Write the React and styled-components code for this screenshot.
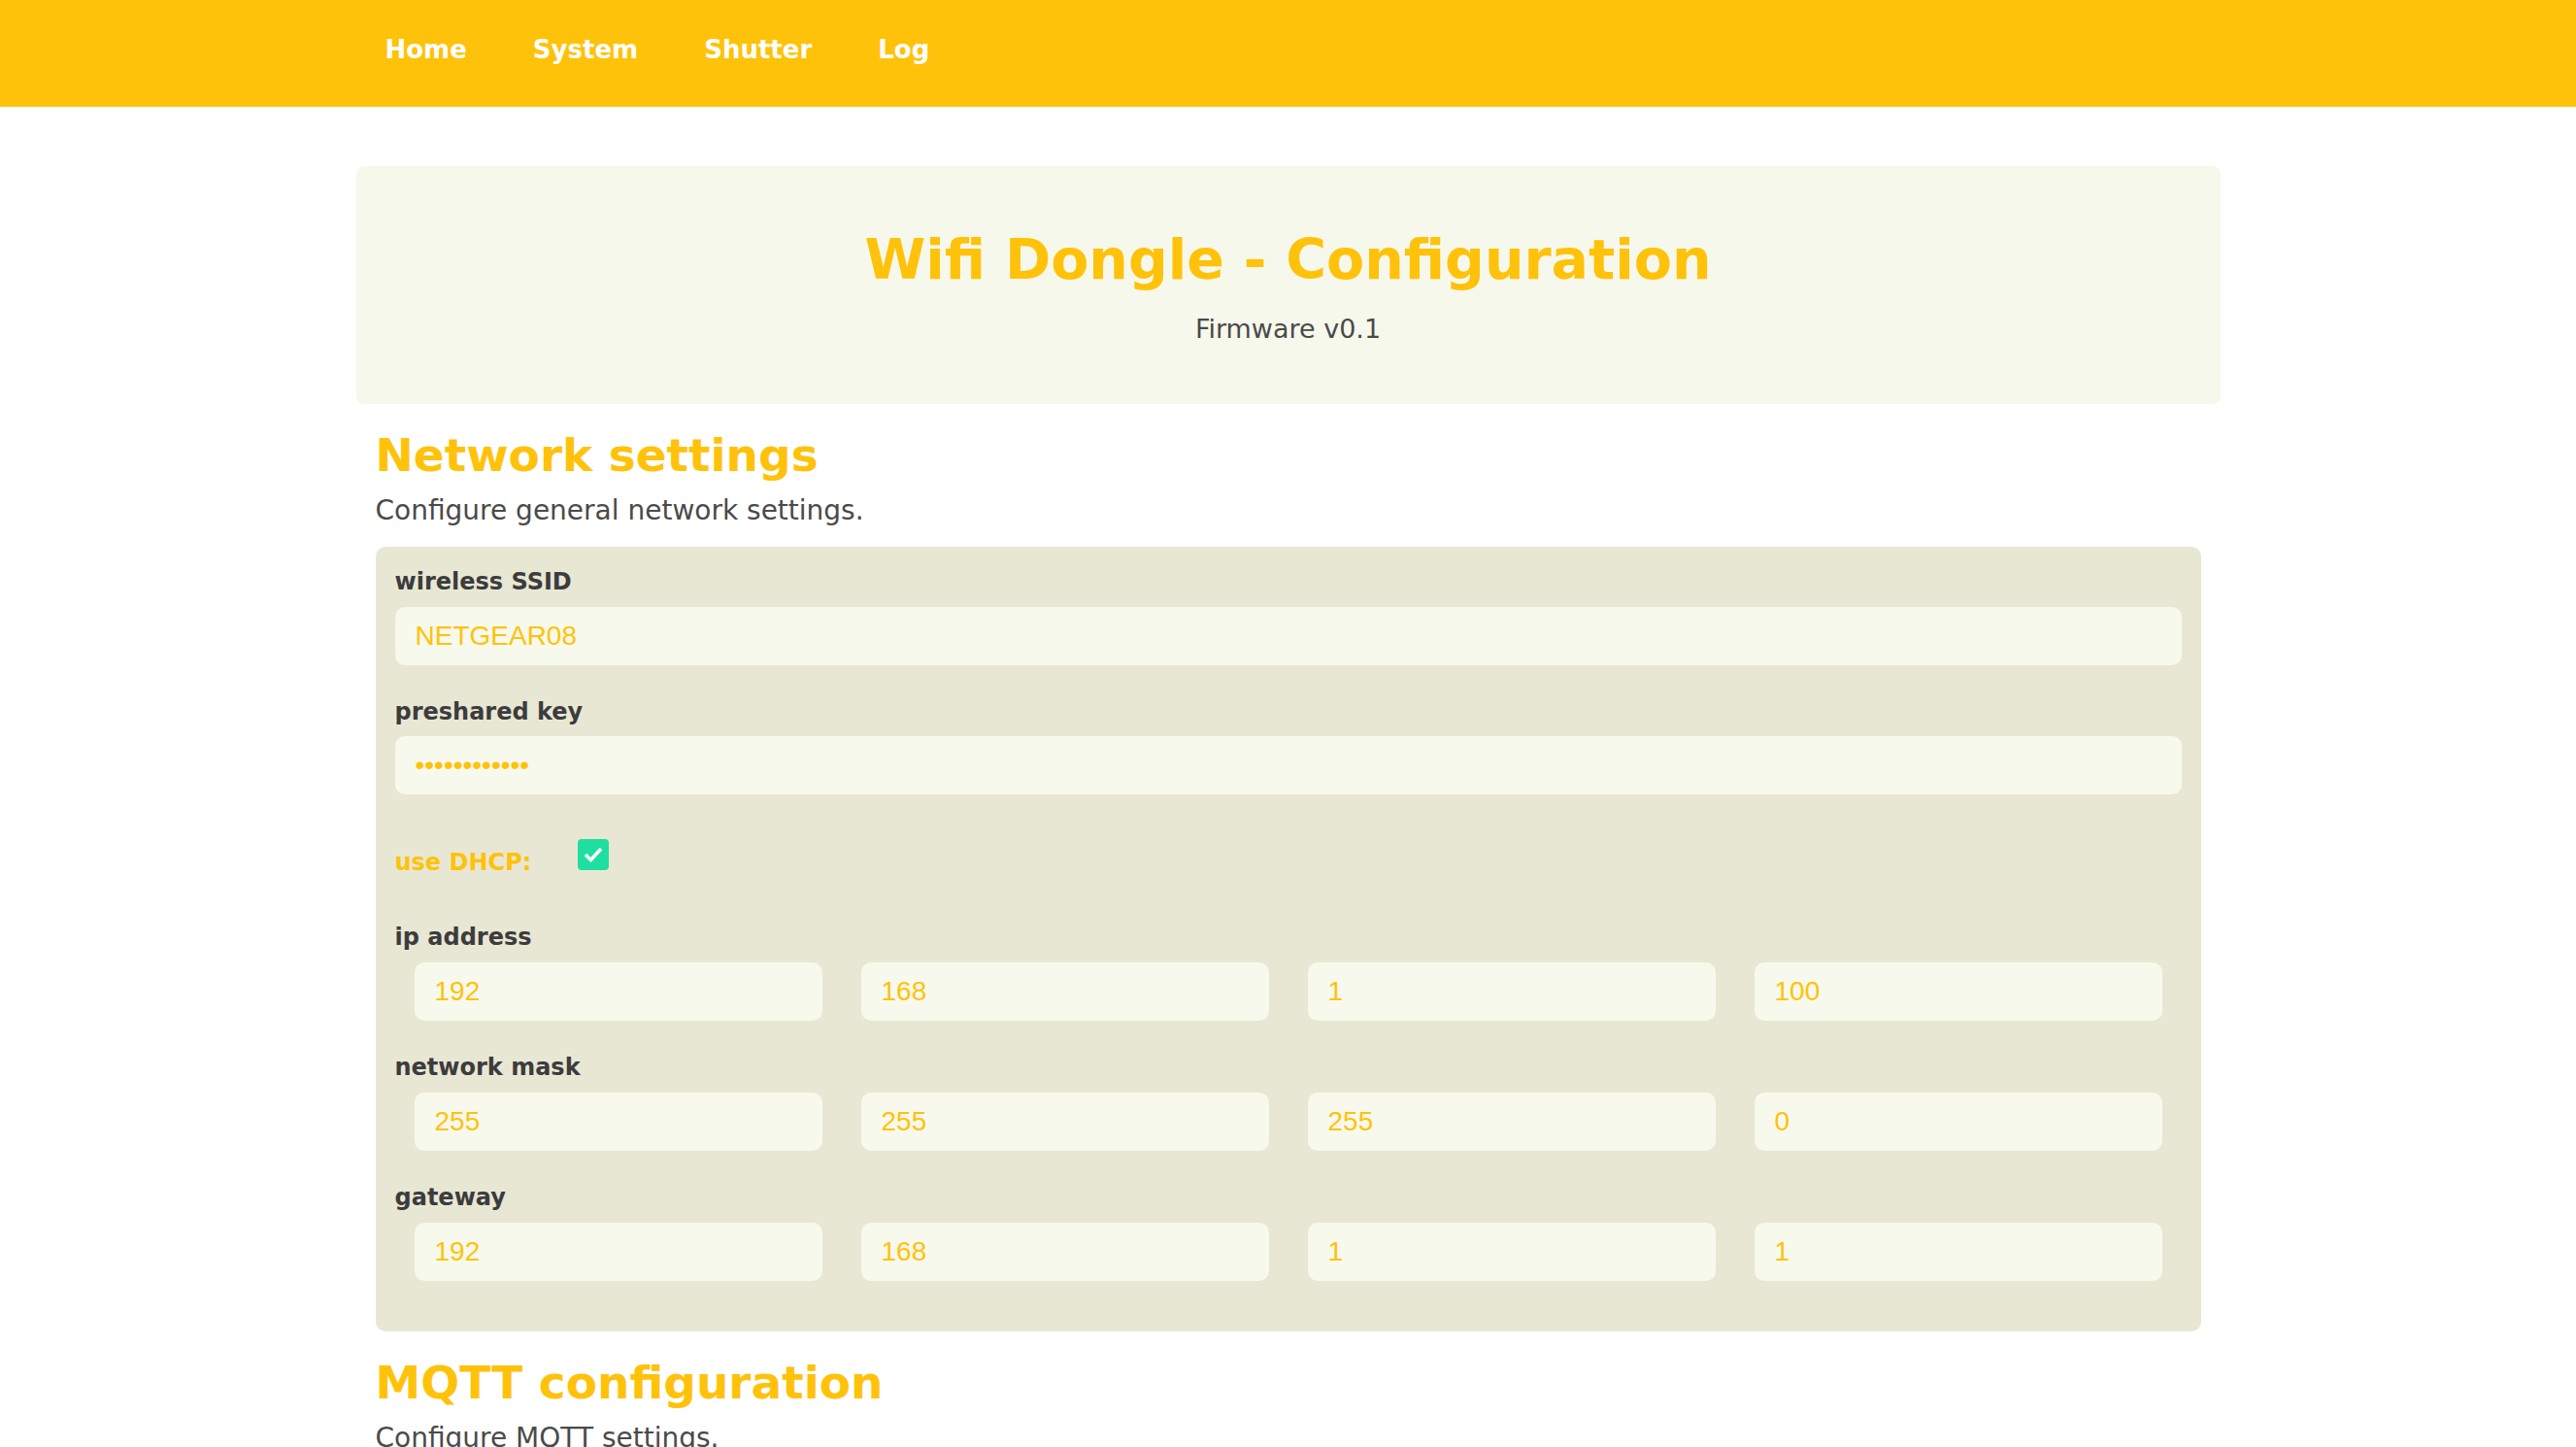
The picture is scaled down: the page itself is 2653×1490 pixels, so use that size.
import React from 'react';
import styled, { createGlobalStyle } from 'styled-components';

const amber = '#ffc20a';

const GlobalStyle = createGlobalStyle`
  body {
    margin: 0;
    background: #fff;
    font-family: "DejaVu Sans", "Open Sans", sans-serif;
  }
`

const Nav = styled.nav`
  background: ${amber};
  height: 110px;
`
const NavInner = styled.div`
  width: 1920px;
  height: 100%;
  margin: 0 auto;
  padding-left: 30px;
  box-sizing: border-box;
  display: flex;
  align-items: center;
  gap: 68px;
`
const NavLink = styled.a`
  color: #fff;
  font-size: 26px;
  font-weight: bold;
  text-decoration: none;
  padding-bottom: 8px;
  cursor: pointer;
`

const Main = styled.main`
  width: 1920px;
  margin: 61px auto 0;
`
const Hero = styled.header`
  background: #f6f8eb;
  border-radius: 8px;
  padding: 62px 20px 60px;
  text-align: center;
`
const Title = styled.h1`
  margin: 0;
  color: ${amber};
  font-size: 57px;
  font-weight: bold;
  line-height: 1.2;
`
const Version = styled.p`
  margin: 22px 0 0;
  color: #4a4a4a;
  font-size: 27px;
  line-height: 1.2;
`

const Section = styled.section`
  padding: 0 20px;
`
const SectionTitle = styled.h2`
  margin: 25px 0 0;
  color: ${amber};
  font-size: 47px;
  font-weight: bold;
  line-height: 1.2;
`
const SectionText = styled.p`
  margin: 12px 0 0;
  color: #4a4a4a;
  font-size: 28px;
  line-height: 1.2;
`
const FormBox = styled.form`
  margin-top: 20px;
  background: #e8e7d4;
  border-radius: 10px;
  padding: 22px 20px 52px;
  display: flex;
  flex-direction: column;
  gap: 34px;
`
const Field = styled.div`
  display: flex;
  flex-direction: column;
  gap: 11px;
`
const Label = styled.label`
  color: ${p => (p.$accent ? amber : '#3c3c3c')};
  font-size: 24px;
  font-weight: bold;
  line-height: 1.2;
`
const TextInput = styled.input`
  width: 100%;
  height: 60px;
  box-sizing: border-box;
  border: none;
  outline: none;
  border-radius: 10px;
  background: #f7f9ec;
  padding: 0 21px;
  font-family: "Liberation Sans", Arial, sans-serif;
  font-size: 28px;
  color: ${amber};
`
const OctetRow = styled.div`
  display: grid;
  grid-template-columns: repeat(4, 1fr);
  column-gap: 40px;
  padding: 0 20px;
`
const CheckRow = styled.div`
  display: flex;
  align-items: flex-start;
  gap: 48px;
  padding: 22px 0 14px;
`
const CheckBox = styled.span`
  width: 32px;
  height: 32px;
  margin-top: -10px;
  border-radius: 4px;
  background: #1fdfa0;
  display: flex;
  align-items: center;
  justify-content: center;
`

const Octets = ({ label, values }) => (
  <Field>
    <Label>{label}</Label>
    <OctetRow>
      {values.map((v, i) => (
        <TextInput key={i} value={v} readOnly />
      ))}
    </OctetRow>
  </Field>
)

export default function App() {
  return (
    <>
      <GlobalStyle />
      <Nav>
        <NavInner>
          <NavLink>Home</NavLink>
          <NavLink>System</NavLink>
          <NavLink>Shutter</NavLink>
          <NavLink>Log</NavLink>
        </NavInner>
      </Nav>
      <Main>
        <Hero>
          <Title>Wifi Dongle - Configuration</Title>
          <Version>Firmware v0.1</Version>
        </Hero>

        <Section>
          <SectionTitle>Network settings</SectionTitle>
          <SectionText>Configure general network settings.</SectionText>
          <FormBox onSubmit={e => e.preventDefault()}>
            <Field>
              <Label>wireless SSID</Label>
              <TextInput value="NETGEAR08" readOnly />
            </Field>
            <Field>
              <Label>preshared key</Label>
              <TextInput type="password" value="secretkey123" readOnly />
            </Field>
            <CheckRow>
              <Label $accent>use DHCP:</Label>
              <CheckBox>
                <svg width="22" height="22" viewBox="0 0 22 22">
                  <polyline points="3,11 8.5,16.5 19,5" fill="none" stroke="#fff" strokeWidth="3.6" />
                </svg>
              </CheckBox>
            </CheckRow>
            <Octets label="ip address" values={['192', '168', '1', '100']} />
            <Octets label="network mask" values={['255', '255', '255', '0']} />
            <Octets label="gateway" values={['192', '168', '1', '1']} />
          </FormBox>
        </Section>

        <Section>
          <SectionTitle>MQTT configuration</SectionTitle>
          <SectionText>Configure MQTT settings.</SectionText>
        </Section>
      </Main>
    </>
  )
}
